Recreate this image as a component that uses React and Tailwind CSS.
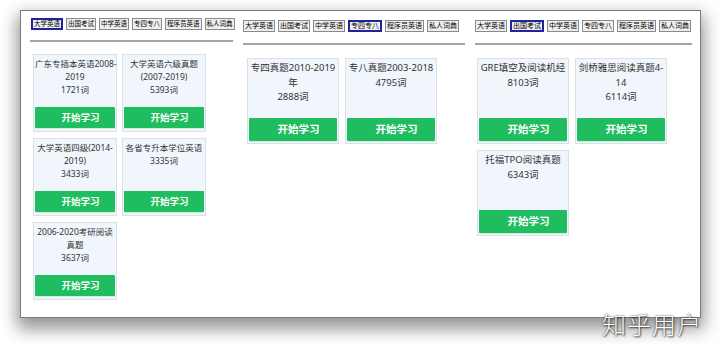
const tabs = ["大学英语", "出国考试", "中学英语", "专四专八", "程序员英语", "私人词典"];

const panels = [
  {
    active: "大学英语",
    wrap: "w-[203px] pt-[7px]",
    tabRow: "ml-[1px] gap-[3px]",
    tab: "h-[12px] px-[1px] text-[6.5px]",
    line: "mt-[10px]",
    grid: "mt-[12px] ml-[3px] grid-cols-[84px_84px] gap-x-[5px] gap-y-[6px]",
    card: "h-[78px] text-[8.5px] leading-[13px] pt-[2px] pb-[3px]",
    btn: "h-[21px] text-[9.5px]",
    items: [
      { lines: ["广东专插本英语2008-", "2019", "1721词"] },
      { lines: ["大学英语六级真题", "(2007-2019)", "5393词"] },
      { lines: ["大学英语四级(2014-", "2019)", "3433词"] },
      { lines: ["各省专升本学位英语", "3335词"] },
      { lines: ["2006-2020考研阅读", "真题", "3637词"] },
    ],
  },
  {
    active: "专四专八",
    wrap: "w-[222px] ml-[10px] pt-[9px]",
    tabRow: "gap-[3px]",
    tab: "h-[12px] px-[1px] text-[7px]",
    line: "mt-[11px]",
    grid: "mt-[13px] ml-[4px] grid-cols-[92px_92px] gap-x-[6px] gap-y-[6px]",
    card: "h-[86px] text-[9.5px] leading-[14.5px] pt-[2px] pb-[2px]",
    btn: "h-[23px] text-[10.5px]",
    items: [
      { lines: ["专四真题2010-2019", "年", "2888词"] },
      { lines: ["专八真题2003-2018", "4795词"] },
    ],
  },
  {
    active: "出国考试",
    wrap: "w-[217px] ml-[10px] pt-[9px]",
    tabRow: "gap-[3px]",
    tab: "h-[12px] px-[1px] text-[7px]",
    line: "mt-[11px]",
    grid: "mt-[13px] ml-[2px] grid-cols-[92px_92px] gap-x-[6px] gap-y-[6px]",
    card: "h-[86px] text-[9.5px] leading-[14.5px] pt-[2px] pb-[2px]",
    btn: "h-[23px] text-[10.5px]",
    items: [
      { lines: ["GRE填空及阅读机经", "8103词"] },
      { lines: ["剑桥雅思阅读真题4-", "14", "6114词"] },
      { lines: ["托福TPO阅读真题", "6343词"] },
    ],
  },
];

function Panel({ p }) {
  return (
    <div className={p.wrap}>
      <div className={`flex ${p.tabRow}`}>
        {tabs.map((t) => (
          <span
            key={t}
            className={`${p.tab} flex items-center whitespace-nowrap bg-[#efefef] text-black ${
              t === p.active ? "border-2 border-[#22229c]" : "border border-[#8a8a8a]"
            }`}
          >
            {t}
          </span>
        ))}
      </div>
      <div className={`${p.line} h-[2px] bg-[#a5a5a5]`} />
      <div className={`grid ${p.grid}`}>
        {p.items.map((it, i) => (
          <div
            key={i}
            className={`${p.card} flex flex-col px-[1px] bg-[#f0f6fc] border border-[#dbe0e6] text-[#333] text-center`}
          >
            <div className="flex-1">
              {it.lines.map((l, j) => (
                <div key={j} className="whitespace-nowrap">
                  {l}
                </div>
              ))}
            </div>
            <div
              className={`${p.btn} flex items-center justify-center pl-[11px] rounded-[1px] bg-[#1fbd5f] text-white font-bold shadow-[0_1px_0_#c9f2d9]`}
            >
              开始学习
            </div>
          </div>
        ))}
      </div>
    </div>
  );
}

export default function App() {
  return (
    <div className="relative w-[720px] h-[345px] bg-white overflow-hidden font-['Noto_Sans','Noto_Sans_CJK_SC',sans-serif]">
      <div className="ml-[20px] mt-[10px] w-[681px] h-[308px] bg-white border border-[#7a7a7a] shadow-[0_8px_16px_3px_rgba(0,0,0,0.42)]">
        <div className="flex pl-[9px]">
          {panels.map((p, i) => (
            <Panel key={i} p={p} />
          ))}
        </div>
      </div>
      <div className="absolute right-[18px] bottom-[9px] text-[24px] leading-none tracking-[1px] text-white font-['Noto_Sans_CJK_SC',sans-serif] font-light [text-shadow:0_0_2px_rgba(0,0,0,0.8),1px_1px_2px_rgba(0,0,0,0.6)]">
        知乎用户
      </div>
    </div>
  );
}
